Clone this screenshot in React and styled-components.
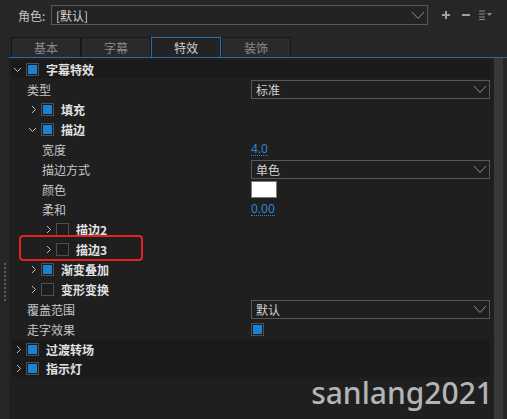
import React from 'react';
import styled, { createGlobalStyle } from 'styled-components';

const GlobalStyle = createGlobalStyle`
  html, body {
    margin: 0;
    padding: 0;
    background: #262626;
  }
  body {
    font-family: "Noto Sans CJK SC", "Noto Sans", sans-serif;
    font-size: 12px;
  }
`;

const Window = styled.div`
  position: relative;
  width: 507px;
  height: 419px;
  overflow: hidden;
  background: #262626;
  display: flex;
  flex-direction: column;
`;

const TopBar = styled.div`
  display: flex;
  align-items: center;
  height: 20px;
  margin-top: 5px;
  padding-left: 18px;
`;

const TopLabel = styled.span`
  width: 33px;
  color: #c4c4c4;
  font-size: 12px;
`;

const Select = styled.div`
  box-sizing: border-box;
  display: flex;
  align-items: center;
  justify-content: space-between;
  width: ${p => p.$w}px;
  height: ${p => p.$h || 19}px;
  padding: 0 2px 0 4px;
  border: 1px solid #585858;
  background: ${p => p.$bg || '#1f1f1f'};
  color: #d2d2d2;
  font-size: 12px;
`;

const IconBtn = styled.span`
  display: flex;
  align-items: center;
  justify-content: center;
  width: 20px;
  height: 20px;
  margin-left: ${p => p.$ml || 0}px;
`;

const TabsRow = styled.div`
  display: flex;
  margin: 12px 0 0 9px;
  padding-left: 2px;
  border-bottom: 1px solid #1f6db3;
`;

const Tab = styled.div`
  box-sizing: border-box;
  width: 70px;
  height: 20px;
  display: flex;
  align-items: center;
  justify-content: center;
  border: 1px solid ${p => (p.$active ? '#2a70b0' : '#171717')};
  border-bottom: none;
  background: ${p => (p.$active ? '#232323' : '#2a2a2a')};
  color: ${p => (p.$active ? '#d0d0d0' : '#8a8a8a')};
  font-size: 12px;
`;

const Body = styled.div`
  flex: 1;
  display: flex;
  min-height: 0;
`;

const Grip = styled.div`
  width: 9px;
  display: flex;
  flex-direction: column;
  align-items: center;
  padding-top: 205px;
`;

const GripDots = styled.div`
  width: 2px;
  height: 40px;
  margin-left: 1px;
  background: repeating-linear-gradient(to bottom, #5a5a5a 0 2px, transparent 2px 4px);
`;

const Panel = styled.div`
  flex: 1;
  background: #1f1f1f;
  padding-top: 1px;
`;

const ScrollCol = styled.div`
  width: 13px;
`;

const ScrollThumb = styled.div`
  width: 9px;
  height: 100%;
  background: #383838;
`;

const Header = styled.div`
  display: flex;
  align-items: center;
  height: 18px;
  margin: 1px 4px 1px 3px;
  background: #1a1a1a;
`;

const Row = styled.div`
  display: grid;
  grid-template-columns: 242px 239px;
  align-items: center;
  height: 20px;
`;

const LabelCell = styled.div`
  display: flex;
  align-items: center;
  padding-left: ${p => 3 + p.$level * 15}px;
  color: #c6c6c6;
  font-size: 12px;
`;

const Twisty = styled.span`
  display: flex;
  align-items: center;
  width: 14px;
  height: 14px;
`;

const Box = styled.span`
  box-sizing: border-box;
  display: inline-flex;
  align-items: center;
  justify-content: center;
  width: 13px;
  height: 13px;
  border: 1px solid #4f4f4f;
  background: #1c1c1c;
  margin-right: ${p => p.$mr || 0}px;
  &::after {
    content: '';
    width: 9px;
    height: 9px;
    background: ${p => (p.$on ? '#1a82d2' : 'transparent')};
  }
`;

const Title = styled.span`
  font-weight: 700;
  color: #e2e2e2;
  font-size: 12px;
`;

const Num = styled.span`
  justify-self: start;
  color: #2f85d4;
  border-bottom: 1px dotted #2f85d4;
  line-height: 13px;
  font-family: "Noto Sans", "Noto Sans CJK SC", sans-serif;
  font-size: 12px;
`;

const Swatch = styled.span`
  box-sizing: border-box;
  width: 26px;
  height: 17px;
  background: #ffffff;
  border: 1px solid #7a7a7a;
`;

const Highlight = styled.div`
  position: absolute;
  left: 19px;
  top: 235px;
  width: 124px;
  height: 26px;
  box-sizing: border-box;
  border: 2px solid #e42222;
  border-radius: 4px;
`;

const Watermark = styled.div`
  position: absolute;
  right: 14px;
  top: 372px;
  color: #b4b4b4;
  font-family: "Noto Sans", sans-serif;
  font-weight: 500;
  font-size: 30px;
`;

const Chevron = ({ open }) =>
  open ? (
    <svg width="9" height="9" viewBox="0 0 9 9" style={{ marginLeft: 1 }}>
      <path d="M1 3 L4.5 6.5 L8 3" fill="none" stroke="#bdbdbd" strokeWidth="1" />
    </svg>
  ) : (
    <svg width="9" height="9" viewBox="0 0 9 9" style={{ marginLeft: 3 }}>
      <path d="M2 1 L5.5 4.5 L2 8" fill="none" stroke="#bdbdbd" strokeWidth="1" />
    </svg>
  );

const DropArrow = () => (
  <svg width="14" height="9" viewBox="0 0 14 9">
    <path d="M1 1 L7 7.5 L13 1" fill="none" stroke="#8c8c8c" strokeWidth="1" />
  </svg>
);

const Dropdown = ({ children }) => (
  <Select $w={239}>
    <span>{children}</span>
    <DropArrow />
  </Select>
);

const Group = ({ level, open, on, name }) => (
  <Row>
    <LabelCell $level={level}>
      <Twisty><Chevron open={open} /></Twisty>
      <Box $on={on} $mr={7} />
      <Title>{name}</Title>
    </LabelCell>
  </Row>
);

const Prop = ({ level, name, children }) => (
  <Row>
    <LabelCell $level={level}>{name}</LabelCell>
    {children || <span />}
  </Row>
);

const SectionHead = ({ open, name }) => (
  <Header>
    <Twisty><Chevron open={open} /></Twisty>
    <Box $on $mr={7} />
    <Title>{name}</Title>
  </Header>
);

export default function App() {
  return (
    <Window>
      <GlobalStyle />
      <TopBar>
        <TopLabel>角色:</TopLabel>
        <Select $w={377} $h={20} $bg="#232323">
          <span>[默认]</span>
          <DropArrow />
        </Select>
        <IconBtn $ml={8}>
          <svg width="10" height="10" viewBox="0 0 10 10">
            <path d="M5 1 V9 M1 5 H9" stroke="#a0a0a0" strokeWidth="2" />
          </svg>
        </IconBtn>
        <IconBtn>
          <svg width="10" height="10" viewBox="0 0 10 10">
            <path d="M1 5 H9" stroke="#a0a0a0" strokeWidth="2" />
          </svg>
        </IconBtn>
        <IconBtn>
          <svg width="14" height="10" viewBox="0 0 14 10">
            <path d="M0 1 H6 M0 4 H6 M0 7 H6 M0 9.5 H6" stroke="#8e8e8e" strokeWidth="1" />
            <path d="M8 3 H13 L10.5 6 Z" fill="#8e8e8e" />
          </svg>
        </IconBtn>
      </TopBar>

      <TabsRow>
        <Tab>基本</Tab>
        <Tab>字幕</Tab>
        <Tab $active>特效</Tab>
        <Tab>装饰</Tab>
      </TabsRow>

      <Body>
        <Grip>
          <GripDots />
        </Grip>
        <Panel>
          <SectionHead open name="字幕特效" />
          <Prop level={1} name="类型"><Dropdown>标准</Dropdown></Prop>
          <Group level={1} on name="填充" />
          <Group level={1} open on name="描边" />
          <Prop level={2} name="宽度"><Num>4.0</Num></Prop>
          <Prop level={2} name="描边方式"><Dropdown>单色</Dropdown></Prop>
          <Prop level={2} name="颜色"><Swatch /></Prop>
          <Prop level={2} name="柔和"><Num>0.00</Num></Prop>
          <Group level={2} name="描边2" />
          <Group level={2} name="描边3" />
          <Group level={1} on name="渐变叠加" />
          <Group level={1} name="变形变换" />
          <Prop level={1} name="覆盖范围"><Dropdown>默认</Dropdown></Prop>
          <Prop level={1} name="走字效果"><Box $on /></Prop>
          <SectionHead name="过渡转场" />
          <SectionHead name="指示灯" />
        </Panel>
        <ScrollCol>
          <ScrollThumb />
        </ScrollCol>
      </Body>

      <Highlight />
      <Watermark>sanlang2021</Watermark>
    </Window>
  );
}
